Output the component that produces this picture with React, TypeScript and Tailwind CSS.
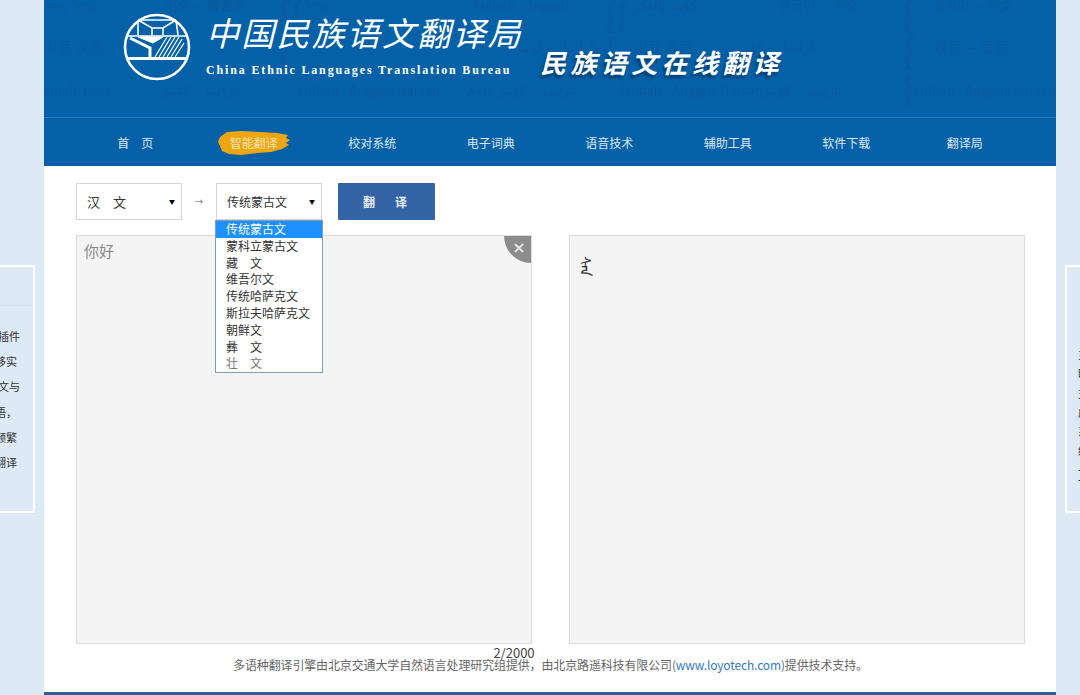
import React from 'react'

const navItems = ['首\u3000页', '智能翻译', '校对系统', '电子词典', '语音技术', '辅助工具', '软件下载', '翻译局']
const languages = ['传统蒙古文', '蒙科立蒙古文', '藏\u3000文', '维吾尔文', '传统哈萨克文', '斯拉夫哈萨克文', '朝鲜文', '彝\u3000文', '壮\u3000文']
const cjk = { fontFamily: '"Noto Sans CJK SC", "Liberation Sans", sans-serif' }

const Logo = () => (
    <svg width="70" height="70" viewBox="0 0 70 70" fill="none" stroke="white" className="shrink-0">
        <circle cx="35" cy="35" r="32" strokeWidth="2.6" />
        <path d="M4 46.5H66" strokeWidth="3.2" />
        <path d="M16 8H54M16 8V23M54 8L56 23M16 8L30 16H41L54 8M30 16V23M41 16V23M6 24H64" strokeWidth="1.6" />
        <path d="M8 26L28 36V45" strokeWidth="3" />
        <path d="M16 25H41L31 31Z" fill="white" strokeWidth="1" />
        <path d="M33 45L45 25M37 45L49 25M41 45L53 25M45 45L57 25M49 45L60 27M53 45L62 31" strokeWidth="1.2" />
    </svg>
)

const Brush = () => (
    <svg width="74" height="26" viewBox="0 0 74 26" className="absolute left-1/2 top-1/2 -translate-x-1/2 -translate-y-1/2">
        <path d="M3 7L10 2L24 1L44 2L60 3L71 5L69 8L73 10L69 13L72 15L65 19L54 22L40 23L24 25L12 24L5 21L3 16L1 12Z" fill="#eda512" />
    </svg>
)

const Select = ({ label, small }: { label: string; small?: boolean }) => (
    <div className={`flex h-[37px] w-[106px] items-center justify-between border border-[#d5d5d5] bg-white pl-[10px] pr-[6px] text-[#333] ${small ? 'text-[12px]' : 'text-[13px]'}`}>
        <span>{label}</span>
        <span className="text-[6px] text-black">▼</span>
    </div>
)

// faint language samples printed behind the banner
const Watermark = () => (
    <div className="absolute inset-0 overflow-hidden text-[#0a5a9e]">
        <div className="flex h-[12px] -translate-y-[5px] whitespace-nowrap text-[13px]">
            <span className="w-[120px]">ᠮᠣᠩ ᠮᠣᠩ</span>
            <span className="w-[140px]">中文 — 维吾尔</span>
            <span className="w-[170px]">ᠮᠣᠩ</span>
            <span className="w-[160px]">Fulbah - Anggris</span>
            <span className="w-[145px]">كۆيىز بالەكر</span>
            <span className="w-[155px]">한국어 — 中文</span>
            <span>한국어 — 中文</span>
        </div>
        <div className="mt-[24px] flex whitespace-nowrap text-[14px]">
            <span className="w-[470px]">汉亘 汉亘</span>
            <span className="w-[120px]">ئارابما — كۆيىز</span>
            <span className="w-[100px]">汉亘 亘亘</span>
            <span className="w-[200px]">ئارابما — كۆيىز</span>
            <span>汉亘 — 亘亘</span>
        </div>
        <div className="mt-[23px] flex whitespace-nowrap text-[13px]">
            <span className="w-[120px]">small. tissk</span>
            <span className="w-[141px]">ئارابما — كۆيىز</span>
            <span className="w-[170px]">Fulbah - Anggris Darsan</span>
            <span className="w-[162px]">ئارابما — كۆيىز بالەكر</span>
            <span className="w-[143px]">Fulbah - Anggris Darsan</span>
            <span className="w-[155px]">ئارابما — كۆيىز</span>
            <span>Fulbah - Anggris Darsan</span>
        </div>
        <div className="absolute left-[236px] top-0 h-[104px] overflow-hidden text-[11px] leading-[12px] [writing-mode:vertical-lr]">ᠮᠣᠩᠭᠣᠯ ᠮᠣᠩᠭᠣᠯ ᠮᠣᠩᠭᠣᠯ</div>
        <div className="absolute left-[562px] top-0 h-[104px] overflow-hidden text-[11px] leading-[12px] [writing-mode:vertical-lr]">ᠮᠣᠩᠭᠣᠯ ᠮᠣᠩᠭᠣᠯ ᠮᠣᠩᠭᠣᠯ</div>
        <div className="absolute left-[860px] top-0 h-[114px] overflow-hidden text-[11px] leading-[12px] [writing-mode:vertical-lr]">ᠮᠣᠩᠭᠣᠯ ᠮᠣᠩᠭᠣᠯ ᠮᠣᠩᠭᠣᠯ</div>
    </div>
)

const App: React.FC = () => {
    return (
        <div className="relative h-[695px] w-[1080px] overflow-hidden bg-[#dde9f5]" style={cjk}>
            <div className="absolute left-[-100px] top-[265px] h-[248px] w-[135px] border-2 border-white pt-[38px] text-[11px] text-[#333]">
                <div className="border-t border-[#d5e0ea] pr-[13px] pt-[18px] text-right leading-[25.2px]">
                    <div>插件</div>
                    <div className="pr-[3px]">移实</div>
                    <div>文与</div>
                    <div className="pr-[3px]">语，</div>
                    <div className="pr-[3px]">频繁</div>
                    <div className="pr-[3px]">翻译</div>
                </div>
            </div>
            <div className="absolute left-[1065px] top-[265px] h-[248px] w-[135px] border-2 border-white pl-[11px] pt-[78px] text-[11px] leading-[19.3px] text-[#333]">
                <div>主</div>
                <div>时</div>
                <div>支</div>
                <div>成</div>
                <div>系</div>
                <div>统</div>
                <div className="mt-[4px] leading-[10px]">一</div>
                <div className="leading-[10px]">一</div>
            </div>

            <div className="ml-[44px] mr-[24px] flex h-[695px] flex-col bg-white">
                <header className="bg-[#0561a7]">
                    <div className="relative flex h-[118px] border-b border-[#2d7cba]">
                        <Watermark />
                        <div className="relative ml-[78px] mt-[12px]"><Logo /></div>
                        <div className="relative ml-[14px] mt-[9px] w-[330px] text-white">
                            <div className="whitespace-nowrap text-[33px] italic leading-[46px] tracking-[2.2px]">中国民族语文翻译局</div>
                            <div className="mt-[8px] whitespace-nowrap text-[12px] font-bold leading-[14px] tracking-[1.85px] [font-family:'Liberation_Serif',serif]">China Ethnic Languages Translation Bureau</div>
                        </div>
                        <div className="relative ml-[4px] mt-[42px] whitespace-nowrap text-[26px] font-bold italic leading-[40px] tracking-[4.4px] text-white [text-shadow:-2px_3px_3px_#033d70]">民族语文在线翻译</div>
                    </div>
                    <nav className="grid h-[48px] grid-cols-8 px-[32px] pt-[1px] text-[12px] text-[#dbe8f3]">
                        {navItems.map((item, index) => (
                            <div key={index} className="flex items-center justify-center">
                                <span className="relative">
                                    {index === 1 && <Brush />}
                                    <span className={`relative ${index === 1 ? 'text-[#f6e3b4]' : ''}`}>{item}</span>
                                </span>
                            </div>
                        ))}
                    </nav>
                </header>

                <main className="pl-[32px] pr-[31px] pt-[17px]">
                    <div className="flex items-center">
                        <Select label={'汉\u3000文'} />
                        <span className="w-[34px] text-center text-[10px] text-[#888] [font-family:'DejaVu_Sans',sans-serif]">→</span>
                        <Select label="传统蒙古文" small />
                        <button className="ml-[16px] flex h-[37px] w-[97px] items-center justify-center gap-[20px] rounded-[1px] bg-[#3464a6] pr-[3px] text-[12px] font-bold text-[#e8eef6]">
                            <span>翻</span><span>译</span>
                        </button>
                    </div>

                    <div className="mt-[15px] flex justify-between">
                        <div className="relative h-[409px] w-[456px] overflow-hidden border border-[#dcdcdc] bg-[#f4f4f4] px-[7px] pt-[3px] text-[15px] leading-[24px] text-[#888]">
                            你好
                            <div className="absolute right-0 top-0 flex h-[27px] w-[27px] items-start justify-end rounded-bl-[27px] bg-[#8c8c8c] pr-[7px] pt-[7px]">
                                <svg width="10" height="10" viewBox="0 0 10 10" stroke="#e4e4e4" strokeWidth="2"><path d="M1 1L9 9M9 1L1 9" /></svg>
                            </div>
                        </div>
                        <div className="h-[409px] w-[456px] border border-[#dcdcdc] bg-[#f4f4f4] pl-[8px] pt-[20px]">
                            <span className="text-[15px] leading-[16px] text-[#333] [writing-mode:vertical-lr]">ᠰᠠᠨ</span>
                        </div>
                    </div>

                    <div className="mt-[2px] flex justify-center pr-[73px] text-[13px] leading-[13px] text-[#444]">2/2000</div>
                    <p className="text-center text-[12px] leading-[12px] tracking-[-0.14px] text-[#666]">
                        多语种翻译引擎由北京交通大学自然语言处理研究组提供，由北京路遥科技有限公司(<a href="#" className="text-[#337ab7]">www.loyotech.com</a>)提供技术支持。
                    </p>
                </main>

                <div className="mt-auto h-[3px] bg-[#2a5f9e]" />
            </div>

            <ul className="absolute left-[215px] top-[220px] w-[108px] border border-[#7f9db9] bg-white text-[12px] leading-[16.8px] text-[#333]">
                {languages.map((lang, index) => (
                    <li key={index} className={`pl-[10px] ${index === 0 ? 'bg-[#1e90ff] text-white' : ''} ${index === 8 ? 'text-[#777]' : ''}`}>{lang}</li>
                ))}
            </ul>
        </div>
    )
}

export default App
